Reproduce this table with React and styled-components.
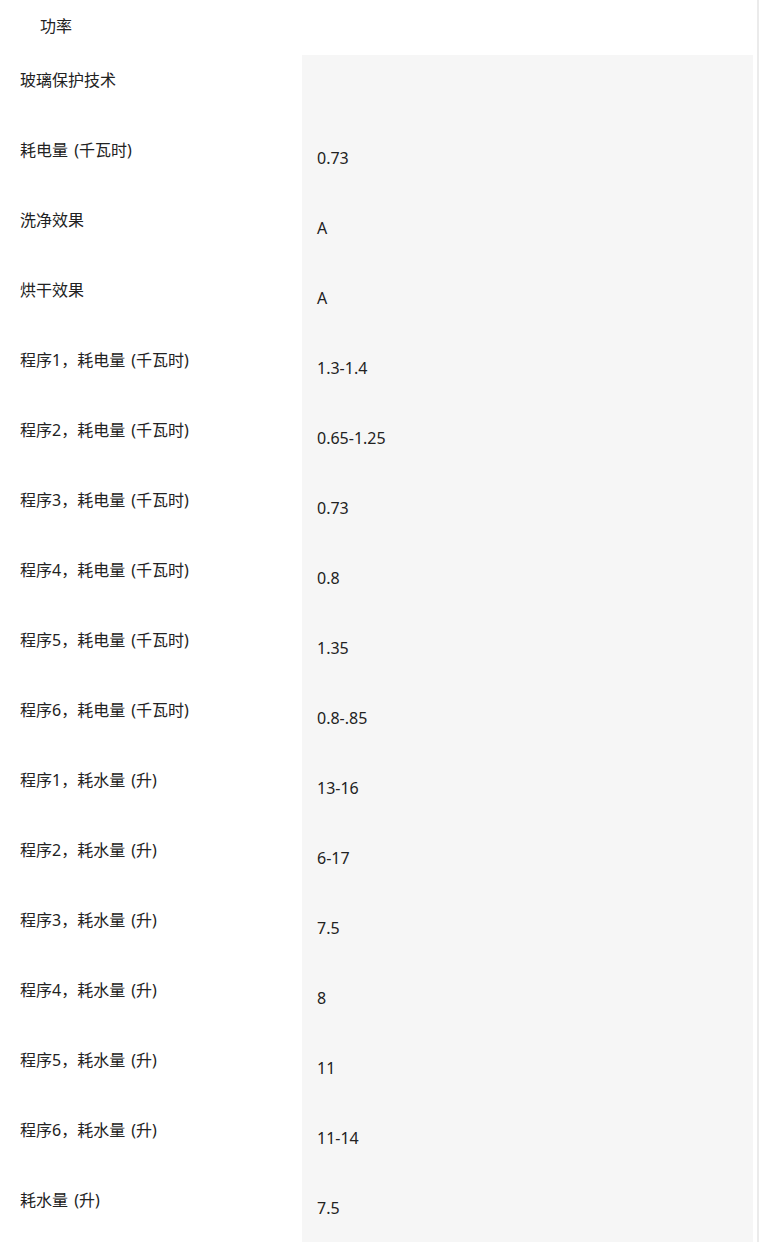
import styled, { createGlobalStyle } from 'styled-components'

const GlobalStyle = createGlobalStyle`
  html, body {
    margin: 0;
    padding: 0;
    background: #fff;
  }
  body {
    font-family: "Noto Sans", "Noto Sans CJK SC", sans-serif;
    color: #222;
  }
`

const specs = [
  { name: '玻璃保护技术', value: '' },
  { name: '耗电量 (千瓦时)', value: '0.73' },
  { name: '洗净效果', value: 'A' },
  { name: '烘干效果', value: 'A' },
  { name: '程序1，耗电量 (千瓦时)', value: '1.3-1.4' },
  { name: '程序2，耗电量 (千瓦时)', value: '0.65-1.25' },
  { name: '程序3，耗电量 (千瓦时)', value: '0.73' },
  { name: '程序4，耗电量 (千瓦时)', value: '0.8' },
  { name: '程序5，耗电量 (千瓦时)', value: '1.35' },
  { name: '程序6，耗电量 (千瓦时)', value: '0.8-.85' },
  { name: '程序1，耗水量 (升)', value: '13-16' },
  { name: '程序2，耗水量 (升)', value: '6-17' },
  { name: '程序3，耗水量 (升)', value: '7.5' },
  { name: '程序4，耗水量 (升)', value: '8' },
  { name: '程序5，耗水量 (升)', value: '11' },
  { name: '程序6，耗水量 (升)', value: '11-14' },
  { name: '耗水量 (升)', value: '7.5' },
]

export default function App() {
  return (
    <>
      <GlobalStyle />
      <StyledPage>
        <SectionTitle>功率</SectionTitle>
        <SpecList>
          {specs.map((spec) => (
            <SpecRow key={spec.name}>
              <SpecName>{spec.name}</SpecName>
              <SpecValue>{spec.value}</SpecValue>
            </SpecRow>
          ))}
        </SpecList>
      </StyledPage>
    </>
  )
}

const StyledPage = styled.div`
  width: 759px;
  border-right: 2px solid #ebebeb;
  height: 1242px;
  overflow: hidden;
  box-sizing: border-box;
`

const SectionTitle = styled.h3`
  margin: 0;
  height: 55px;
  padding: 14px 0 0 40px;
  box-sizing: border-box;
  font-size: 16px;
  font-weight: 400;
  line-height: 24px;
`

const SpecList = styled.div`
  width: 753px;
  display: flex;
  flex-direction: column;
`

const SpecRow = styled.div`
  display: grid;
  grid-template-columns: 302px 1fr;
  height: 70px;
  font-size: 16px;
  line-height: 24px;
`

const SpecName = styled.div`
  padding: 13px 0 0 20px;
  word-spacing: 2px;
`

const SpecValue = styled.div`
  background: #f6f6f6;
  padding: 21px 0 0 15px;
`
